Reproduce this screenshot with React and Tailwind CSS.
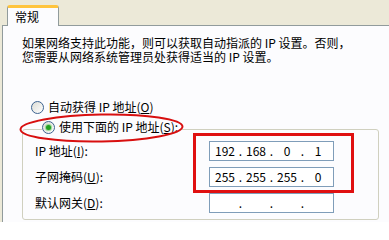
import React from "react";

function Radio({ checked }) {
  return (
    <span className="w-[13px] h-[13px] rounded-full border border-[#3d6390] bg-gradient-to-br from-[#dcdcd5] to-[#ffffff] flex items-center justify-center shrink-0">
      {checked ? (
        <span className="w-[5px] h-[5px] rounded-full bg-[#23a123] shadow-[0_0_1px_1px_#8fd48f]" />
      ) : null}
    </span>
  );
}

function IpField({ parts }) {
  return (
    <div className="w-[125px] h-[20px] border border-[#7f9db9] bg-white flex items-center pl-[3px] text-[12px] leading-none text-black">
      {parts.map((p, i) => (
        <React.Fragment key={i}>
          <span className="w-[24px] text-center">{p}</span>
          {i < 3 ? <span className="w-[7px] text-right pr-[2px]">.</span> : null}
        </React.Fragment>
      ))}
    </div>
  );
}

function Row({ label, acc, parts }) {
  return (
    <div className="h-[20px] flex items-center">
      <div className="w-[174px] whitespace-nowrap">
        {label}(<u>{acc}</u>):
      </div>
      <IpField parts={parts} />
    </div>
  );
}

export default function App() {
  return (
    <div className="w-[389px] h-[222px] overflow-hidden bg-[#ece9d8] flex flex-col relative font-['Noto_Sans_CJK_SC',sans-serif] text-[12px] text-black">
      <div className="h-[25px] pl-[7px] flex items-end shrink-0">
        <div className="relative z-10 -mb-[1px] w-[52px] h-[21px] bg-[#fcfcfe] border-l border-r border-[#919b9c] border-t-[3px] border-t-[#ffc43c] rounded-t-[3px] flex items-center pl-[7px] leading-none">
          常规
        </div>
      </div>
      <div className="flex-1 ml-[2px] border-l border-t border-[#919b9c] bg-[#fcfcfe]">
        <div className="pt-[10px] pl-[19px] whitespace-nowrap flex flex-col">
          <div className="h-[14px] leading-[14px]">如果网络支持此功能，则可以获取自动指派的 IP 设置。否则，</div>
          <div className="h-[14px] leading-[14px]">您需要从网络系统管理员处获得适当的 IP 设置。</div>
        </div>
        <div className="mt-[33px] ml-[28px] h-[20px] flex items-center gap-[4px] whitespace-nowrap">
          <Radio />
          <span>
            自动获得 IP 地址(<u>O</u>)
          </span>
        </div>
        <fieldset className="ml-[19px] w-[357px] border border-[#d0d0bf] rounded-[3px] pl-[12px] pb-[6px]">
          <legend className="ml-[7px] pr-[4px] h-[24px]">
            <div className="h-[20px] flex items-center gap-[4px] whitespace-nowrap">
              <Radio checked />
              <span>
                使用下面的 IP 地址(<u>S</u>):
              </span>
            </div>
          </legend>
          <div className="flex flex-col gap-[6px]">
            <Row label="IP 地址" acc="I" parts={["192", "168", "0", "1"]} />
            <Row label="子网掩码" acc="U" parts={["255", "255", "255", "0"]} />
            <Row label="默认网关" acc="D" parts={["", "", "", ""]} />
          </div>
        </fieldset>
      </div>

      <div className="absolute left-[193px] top-[133px] w-[161px] h-[60px] border-[3px] border-[#e01010]" />
      <svg className="absolute left-0 top-0 pointer-events-none" width="389" height="222">
        <ellipse cx="101.5" cy="128" rx="81" ry="13.5" fill="none" stroke="#d80f0f" strokeWidth="2" transform="rotate(-1 101.5 128)" />
      </svg>
    </div>
  );
}
